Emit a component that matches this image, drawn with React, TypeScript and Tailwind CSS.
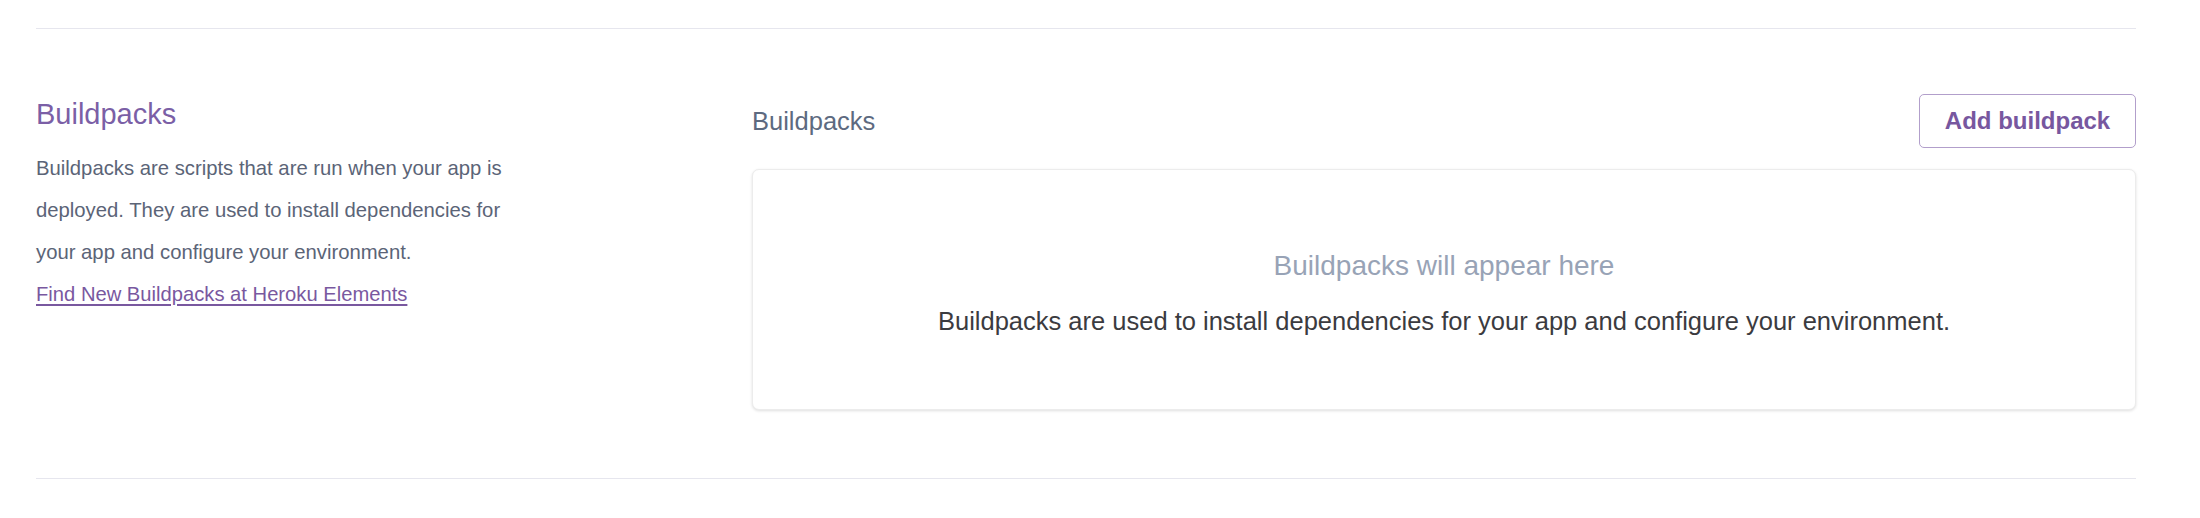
import React from "react";

export default function App() {
  return (
    <div
      className="w-[2200px] h-[518px] bg-white pl-[36px] pr-[64px] pt-[28px] overflow-hidden"
      style={{ fontFamily: '"Liberation Sans", Arial, sans-serif' }}
    >
      <div className="border-t border-[#e6e6ee]" />
      <div className="flex pt-[65px] pb-[68px]">
        <div className="w-[716px] shrink-0 pt-[3px]">
          <h2 className="text-[29px] leading-[34px] text-[#7b5fa6] font-normal">Buildpacks</h2>
          <p className="mt-[16px] w-[480px] text-[20.3px] leading-[42px] text-[#5b6477]">
            Buildpacks are scripts that are run when your app is deployed. They are used to install dependencies for
            your app and configure your environment.
          </p>
          <a href="#" className="block text-[20.2px] leading-[42px] text-[#79589f] underline underline-offset-[3px]">
            Find New Buildpacks at Heroku Elements
          </a>
        </div>
        <div className="flex-1 min-w-0">
          <div className="flex items-center justify-between h-[54px]">
            <div className="text-[25.5px] text-[#5d6a80]">Buildpacks</div>
            <button className="w-[217px] h-[54px] rounded-[5px] border border-[#b29fcb] bg-white text-[24px] font-bold text-[#77579f]">
              Add buildpack
            </button>
          </div>
          <div className="mt-[21px] h-[241px] rounded-[7px] border border-[#ececec] bg-white shadow-[0_1px_3px_rgba(0,0,0,0.13)] flex flex-col items-center pt-[79px]">
            <div className="text-[28px] leading-[34px] text-[#98a3b6]">Buildpacks will appear here</div>
            <div className="mt-[23px] text-[25.5px] leading-[30px] text-[#3b3b40]">
              Buildpacks are used to install dependencies for your app and configure your environment.
            </div>
          </div>
        </div>
      </div>
      <div className="border-t border-[#e6e6ee]" />
    </div>
  );
}
